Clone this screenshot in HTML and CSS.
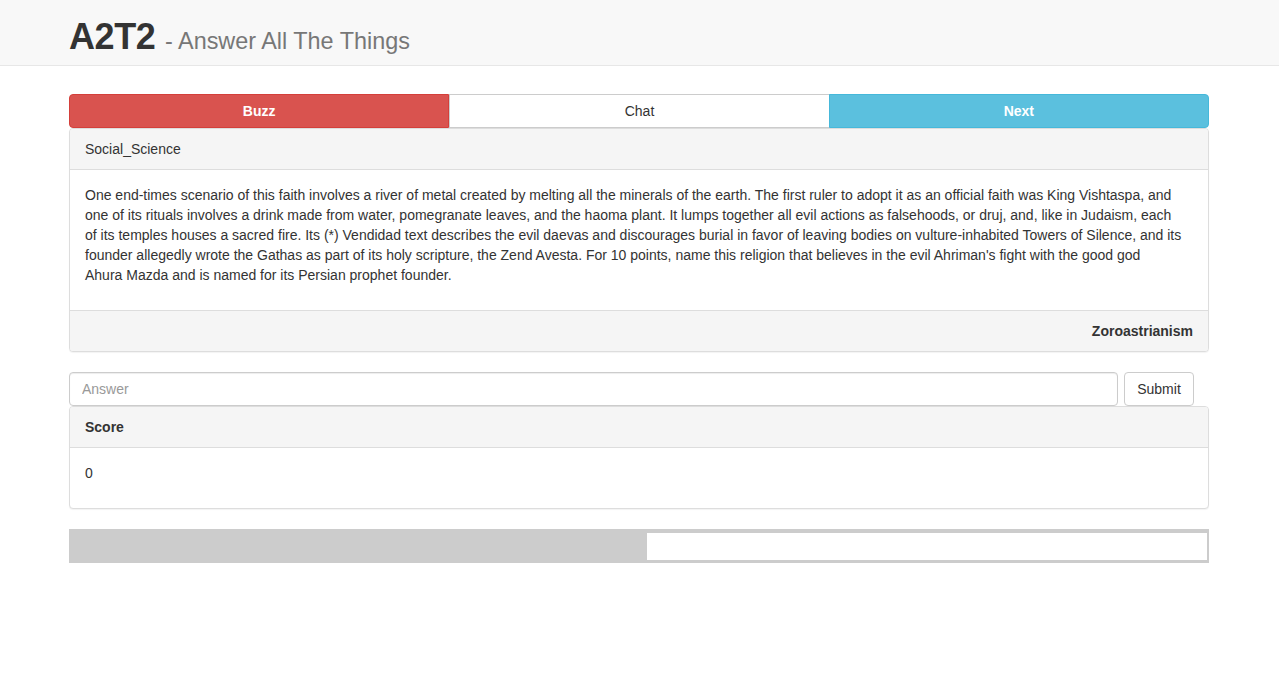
FILE: index.html
```html
<!DOCTYPE html>
<html>
<head>
<meta charset="utf-8">
<link rel="stylesheet" href="styles.css">
</head>
<body>
<header class="navbar">
  <div class="container">
    <h1 class="brand">A2T2 <small>- Answer All The Things</small></h1>
  </div>
</header>
<main class="container main">
  <div class="btn-group">
    <button class="btn btn-danger">Buzz</button>
    <button class="btn btn-default">Chat</button>
    <button class="btn btn-info">Next</button>
  </div>
  <div class="panel">
    <div class="panel-heading">Social_Science</div>
    <div class="panel-body">
      <p>One end-times scenario of this faith involves a river of metal created by melting all the minerals of the earth. The first ruler to adopt it as an official faith was King Vishtaspa, and<br>one of its rituals involves a drink made from water, pomegranate leaves, and the haoma plant. It lumps together all evil actions as falsehoods, or druj, and, like in Judaism, each<br>of its temples houses a sacred fire. Its (*) Vendidad text describes the evil daevas and discourages burial in favor of leaving bodies on vulture-inhabited Towers of Silence, and its<br>founder allegedly wrote the Gathas as part of its holy scripture, the Zend Avesta. For 10 points, name this religion that believes in the evil Ahriman's fight with the good god<br>Ahura Mazda and is named for its Persian prophet founder.</p>
    </div>
    <div class="panel-footer">Zoroastrianism</div>
  </div>
  <form class="answer-form">
    <input class="form-control" type="text" placeholder="Answer">
    <button type="button" class="btn btn-default btn-submit">Submit</button>
  </form>
  <div class="panel panel-score">
    <div class="panel-heading bold">Score</div>
    <div class="panel-body">
      <p>0</p>
    </div>
  </div>
  <div class="progress">
    <div class="progress-fill"></div>
    <div class="progress-rest"></div>
  </div>
</main>
</body>
</html>
```

FILE: styles.css
```css
* { box-sizing: border-box; }
html, body { margin: 0; padding: 0; }
body {
  font-family: "Liberation Sans", Arial, Helvetica, sans-serif;
  font-size: 14px;
  line-height: 20px;
  color: #333;
  background: #fff;
}
.container {
  width: 1170px;
  margin: 0 auto;
  padding: 0 15.5px 0 14.5px;
}
.navbar {
  background: #f8f8f8;
  border-bottom: 1px solid #e7e7e7;
  height: 66px;
  padding-top: 17px;
}
.brand {
  margin: 0;
  font-size: 36px;
  line-height: 40px;
  font-weight: bold;
  color: #333;
  letter-spacing: -0.4px;
}
.brand small {
  font-size: 23.4px;
  font-weight: normal;
  color: #777;
  letter-spacing: 0;
}
.main { padding-top: 28px; }
.btn-group {
  display: flex;
}
.btn {
  font-family: inherit;
  font-size: 14px;
  line-height: 20px;
  padding: 6px 12px;
  border: 1px solid #ccc;
  background: #fff;
  color: #333;
  margin: 0;
  cursor: pointer;
}
.btn-group .btn { flex: 1 1 0; border-radius: 0; }
.btn-group .btn:first-child { border-radius: 4px 0 0 4px; }
.btn-group .btn:last-child { border-radius: 0 4px 4px 0; margin-left: -1px; }
.btn-danger { background: #d9534f; border-color: #d43f3a; color: #fff; font-weight: bold; }
.btn-info { background: #5bc0de; border-color: #46b8da; color: #fff; font-weight: bold; }
.panel {
  border: 1px solid #ddd;
  border-radius: 4px;
  box-shadow: 0 1px 1px rgba(0,0,0,.05);
  margin-bottom: 20px;
  background: #fff;
}
.panel-heading {
  background: #f5f5f5;
  border-bottom: 1px solid #ddd;
  padding: 10px 15px;
  border-radius: 3px 3px 0 0;
}
.bold { font-weight: bold; }
.panel-body { padding: 15px; }
.panel-body p { margin: 0 0 10px; }
.panel-footer {
  background: #f5f5f5;
  border-top: 1px solid #ddd;
  padding: 10px 15px;
  text-align: right;
  font-weight: bold;
  border-radius: 0 0 3px 3px;
}
.answer-form {
  display: flex;
  gap: 6px;
  margin: 0;
}
.form-control {
  width: 1049px;
  height: 34px;
  padding: 6px 12px;
  font-family: inherit;
  font-size: 14px;
  border: 1px solid #ccc;
  border-radius: 4px;
  box-shadow: inset 0 1px 1px rgba(0,0,0,.075);
  color: #555;
}
.form-control::placeholder { color: #999; }
.btn-submit { border-radius: 4px; width: 70px; padding: 6px 0; }
.panel-score { margin-bottom: 20px; }
.progress {
  display: flex;
  height: 34px;
  background: #ccc;
  padding: 4px 2px 3px 0;
}
.progress-fill { flex: 0 0 578px; }
.progress-rest { flex: 1; background: #fff; }
```
